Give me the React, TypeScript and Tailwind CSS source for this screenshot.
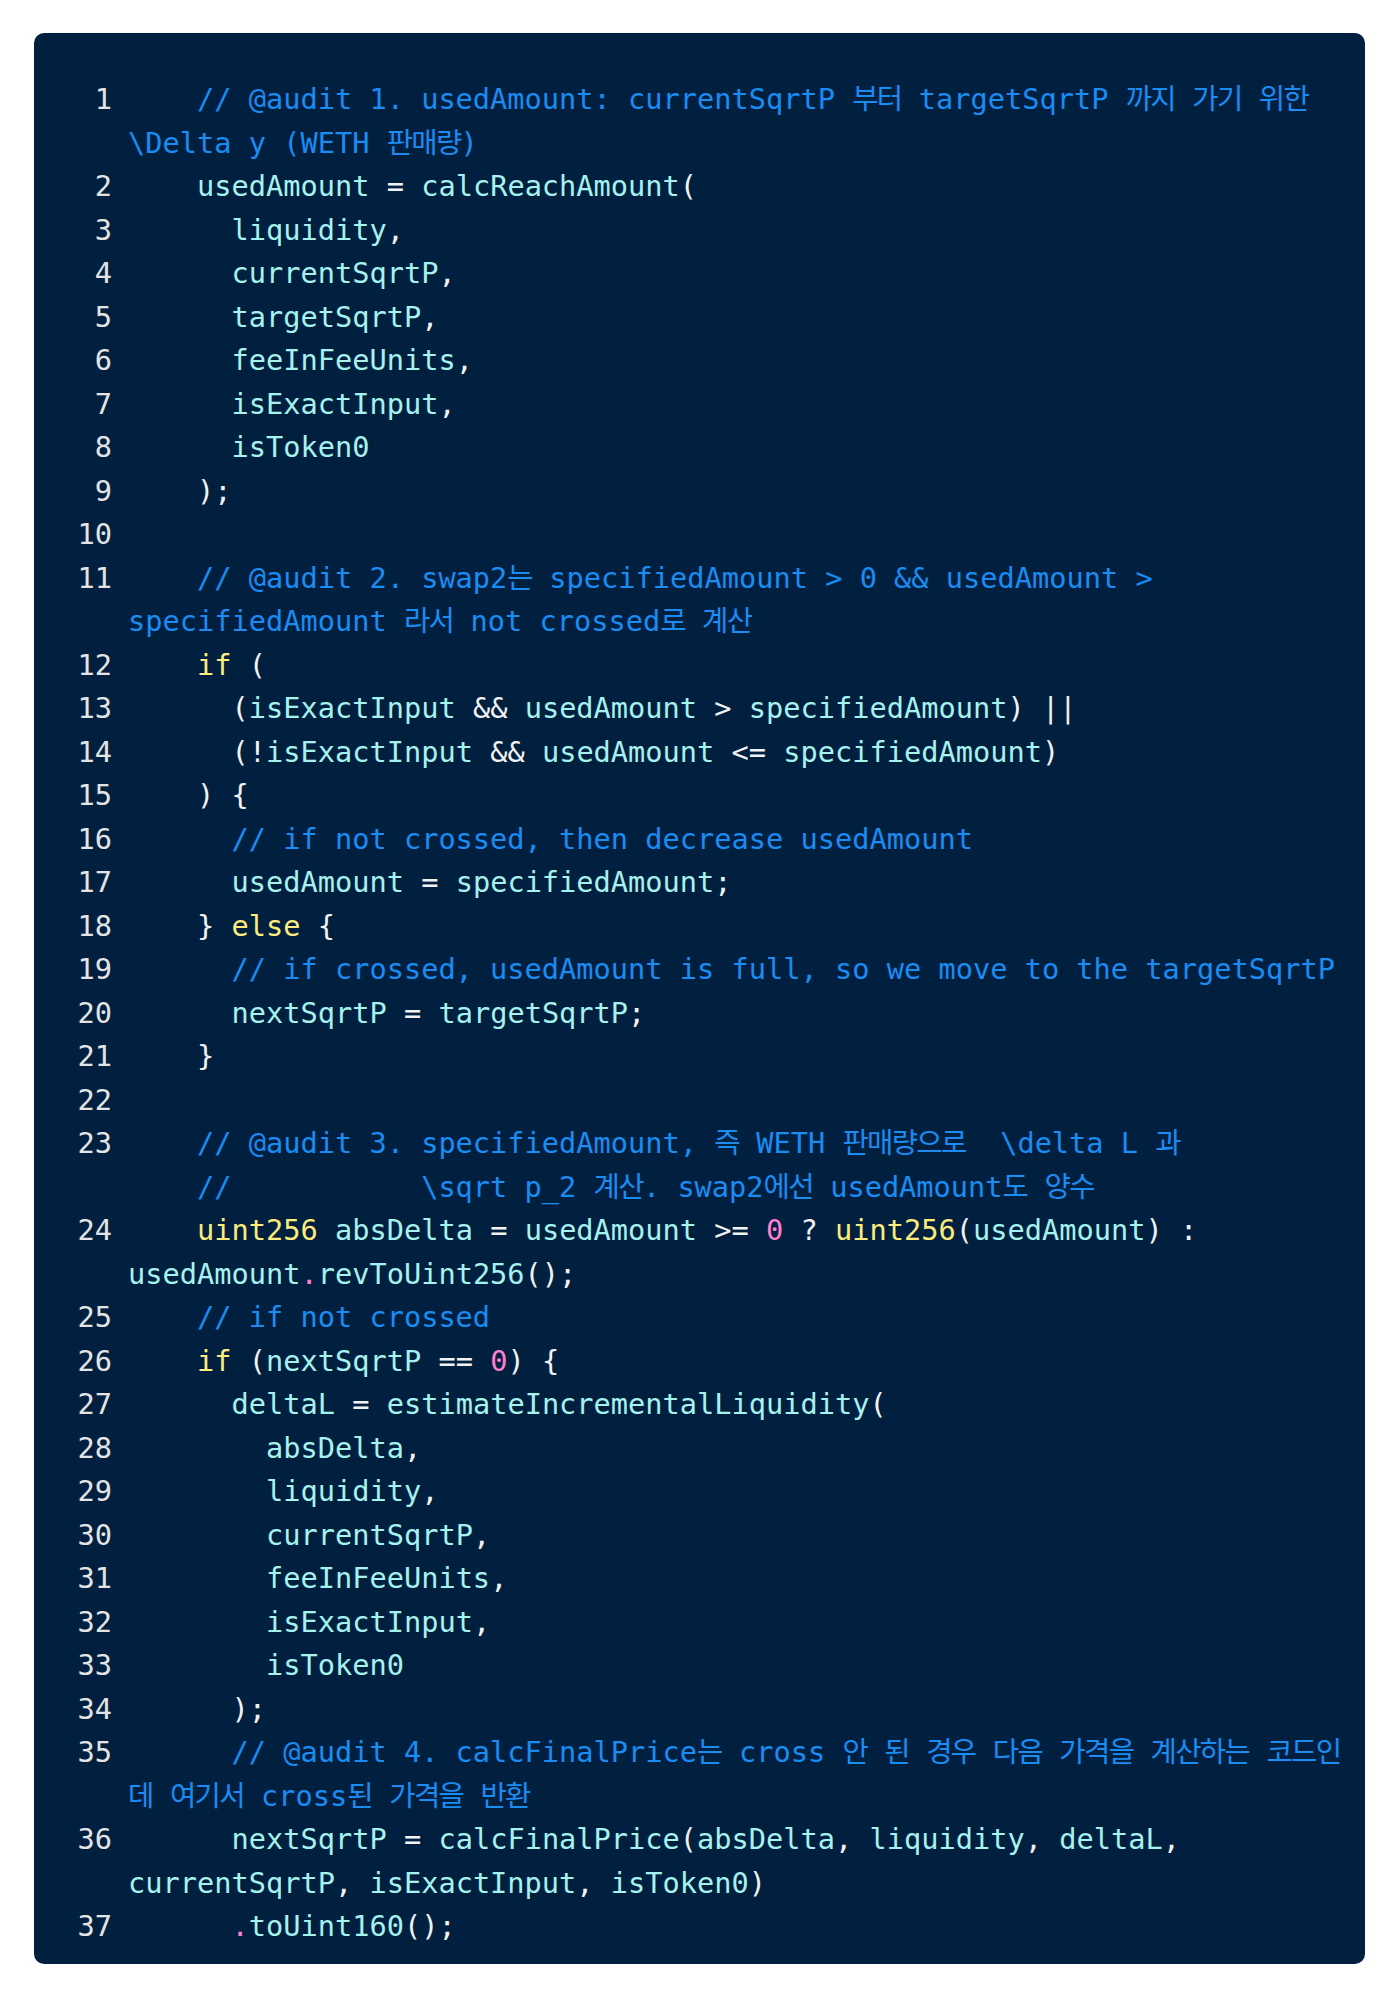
import React from 'react'

const lines: [number, string[]][] = [
  [1, ['    // @audit 1. usedAmount: currentSqrtP 부터 targetSqrtP 까지 가기 위한', '\\Delta y (WETH 판매량)']],
  [2, ['    usedAmount = calcReachAmount(']],
  [3, ['      liquidity,']],
  [4, ['      currentSqrtP,']],
  [5, ['      targetSqrtP,']],
  [6, ['      feeInFeeUnits,']],
  [7, ['      isExactInput,']],
  [8, ['      isToken0']],
  [9, ['    );']],
  [10, ['']],
  [11, ['    // @audit 2. swap2는 specifiedAmount > 0 && usedAmount >', 'specifiedAmount 라서 not crossed로 계산']],
  [12, ['    if (']],
  [13, ['      (isExactInput && usedAmount > specifiedAmount) ||']],
  [14, ['      (!isExactInput && usedAmount <= specifiedAmount)']],
  [15, ['    ) {']],
  [16, ['      // if not crossed, then decrease usedAmount']],
  [17, ['      usedAmount = specifiedAmount;']],
  [18, ['    } else {']],
  [19, ['      // if crossed, usedAmount is full, so we move to the targetSqrtP']],
  [20, ['      nextSqrtP = targetSqrtP;']],
  [21, ['    }']],
  [22, ['']],
  [23, ['    // @audit 3. specifiedAmount, 즉 WETH 판매량으로  \\delta L 과', '    //           \\sqrt p_2 계산. swap2에선 usedAmount도 양수']],
  [24, ['    uint256 absDelta = usedAmount >= 0 ? uint256(usedAmount) :', 'usedAmount.revToUint256();']],
  [25, ['    // if not crossed']],
  [26, ['    if (nextSqrtP == 0) {']],
  [27, ['      deltaL = estimateIncrementalLiquidity(']],
  [28, ['        absDelta,']],
  [29, ['        liquidity,']],
  [30, ['        currentSqrtP,']],
  [31, ['        feeInFeeUnits,']],
  [32, ['        isExactInput,']],
  [33, ['        isToken0']],
  [34, ['      );']],
  [35, ['      // @audit 4. calcFinalPrice는 cross 안 된 경우 다음 가격을 계산하는 코드인', '데 여기서 cross된 가격을 반환']],
  [36, ['      nextSqrtP = calcFinalPrice(absDelta, liquidity, deltaL,', 'currentSqrtP, isExactInput, isToken0)']],
  [37, ['      .toUint160();']],
]

const keywords = ['if', 'else', 'uint256']

// hangul runs get a slightly tighter advance
function Comment({ text }: { text: string }) {
  const parts = text.split(/([\uac00-\ud7a3]+)/)
  return (
    <span className="text-[#1a8cf2]">
      {parts.map((p, i) =>
        /[\uac00-\ud7a3]/.test(p) ? (
          <span key={i} className="tracking-[-1.7px]">{p}</span>
        ) : (
          <React.Fragment key={i}>{p}</React.Fragment>
        )
      )}
    </span>
  )
}

function Highlight({ text, comment }: { text: string; comment: boolean }) {
  if (comment) return <Comment text={text} />
  const idx = text.indexOf('//')
  if (idx >= 0) {
    return (
      <>
        <Highlight text={text.slice(0, idx)} comment={false} />
        <Comment text={text.slice(idx)} />
      </>
    )
  }
  const parts = text.match(/[A-Za-z_][A-Za-z0-9_]*|\d+|\s+|./g) || []
  return (
    <>
      {parts.map((p, i) => {
        if (keywords.includes(p)) return <span key={i} className="text-[#fbec7c]">{p}</span>
        if (/^\d+$/.test(p)) return <span key={i} className="text-[#ff7fd0]">{p}</span>
        if (p === '.') return <span key={i} className="text-[#ff7fd0]">{p}</span>
        if (/^[A-Za-z_]/.test(p)) return <span key={i} className="text-[#a6f2ee]">{p}</span>
        return <span key={i} className="text-[#f2f2f2]">{p}</span>
      })}
    </>
  )
}

export default function App() {
  const rows: { n?: number; text: string; comment: boolean }[] = []
  lines.forEach(([n, parts]) => {
    const isComment = parts[0].trim().startsWith('//')
    parts.forEach((t, j) => rows.push({ n: j === 0 ? n : undefined, text: t, comment: isComment }))
  })

  return (
    <div className="min-h-[1998px] bg-white pt-[33px] pl-[34px] pr-[35px]">
      <div
        className="rounded-[10px] bg-[#012040] pt-[45px] pb-[15px] pl-[18px] text-[28.65px] leading-[43.5px]"
        style={{ fontFamily: '"DejaVu Sans Mono", "Noto Sans CJK KR", monospace' }}
      >
        {rows.map((r, i) => (
          <div key={i} className="flex gap-[16px]">
            <span className="w-[60px] shrink-0 text-right text-[#e4e4e4]">{r.n ?? ''}</span>
            <span className="whitespace-pre">
              <Highlight text={r.text} comment={r.comment} />
            </span>
          </div>
        ))}
      </div>
    </div>
  )
}
